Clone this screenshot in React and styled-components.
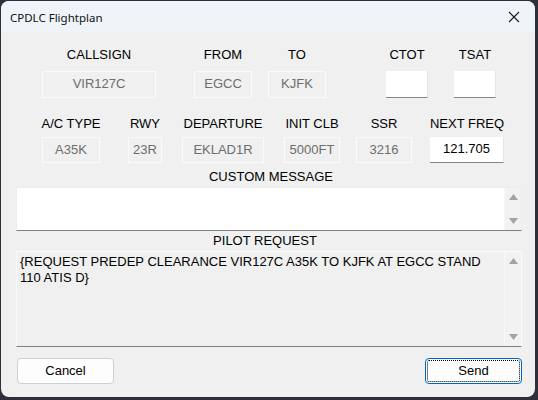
import React from 'react';
import styled, { createGlobalStyle } from 'styled-components';

const GlobalStyle = createGlobalStyle`
  html, body {
    margin: 0;
    padding: 0;
    background: #2e2f3b;
  }
  body {
    width: 538px;
    height: 400px;
    overflow: hidden;
  }
`;

const row1 = [
  { label: 'CALLSIGN', value: 'VIR127C', width: 114, offset: 26 },
  { label: 'FROM', value: 'EGCC', width: 58, offset: 38 },
  { label: 'TO', value: 'KJFK', width: 58, offset: 16 },
  { label: 'CTOT', value: '', width: 42, offset: 60, editable: true },
  { label: 'TSAT', value: '', width: 42, offset: 26, editable: true },
];

const row2 = [
  { label: 'A/C TYPE', value: 'A35K', width: 58, offset: 26 },
  { label: 'RWY', value: '23R', width: 34, offset: 28 },
  { label: 'DEPARTURE', value: 'EKLAD1R', width: 82, offset: 20 },
  { label: 'INIT CLB', value: '5000FT', width: 56, offset: 20 },
  { label: 'SSR', value: '3216', width: 56, offset: 16 },
  { label: 'NEXT FREQ', value: '121.705', width: 74, offset: 18, editable: true },
];

function CloseIcon() {
  return (
    <svg width="12" height="12" viewBox="0 0 12 12">
      <path d="M1 1 L11 11 M11 1 L1 11" stroke="#1b1b1b" strokeWidth="1.1" fill="none" />
    </svg>
  );
}

function Triangle({ down }) {
  return (
    <svg width="9" height="6" viewBox="0 0 9 6">
      <path d={down ? 'M0 0 H9 L4.5 6 Z' : 'M0 6 H9 L4.5 0 Z'} fill="#a3a3a3" />
    </svg>
  );
}

function Scroller() {
  return (
    <ScrollTrack>
      <Triangle />
      <Triangle down />
    </ScrollTrack>
  );
}

function FieldRow({ fields, gap, boxHeight, top }) {
  return (
    <Row $top={top}>
      {fields.map(f => (
        <Field key={f.label} $width={f.width} $offset={f.offset} $gap={gap}>
          <Label>{f.label}</Label>
          {f.editable ? (
            <InputBox $height={boxHeight}>{f.value}</InputBox>
          ) : (
            <ReadBox $height={boxHeight}>{f.value}</ReadBox>
          )}
        </Field>
      ))}
    </Row>
  );
}

export default function App() {
  return (
    <>
      <GlobalStyle />
      <Window>
        <TitleBar>
          <Title>CPDLC Flightplan</Title>
          <CloseButton>
            <CloseIcon />
          </CloseButton>
        </TitleBar>
        <Body>
          <FieldRow fields={row1} gap={9} boxHeight={27} top={15} />
          <FieldRow fields={row2} gap={6} boxHeight={26} top={18} />

          <Section $top={6}>
            <SectionLabel $shift={2}>CUSTOM MESSAGE</SectionLabel>
            <MessageBox $height={44} $white>
              <MessageText />
              <Scroller />
            </MessageBox>
          </Section>

          <Section $top={2}>
            <SectionLabel $shift={-4}>PILOT REQUEST</SectionLabel>
            <MessageBox $height={96}>
              <MessageText>
                {'{REQUEST PREDEP CLEARANCE VIR127C A35K TO KJFK AT EGCC STAND 110 ATIS D}'}
              </MessageText>
              <Scroller />
            </MessageBox>
          </Section>

          <Buttons>
            <Button>Cancel</Button>
            <Button $primary>
              <FocusRing>Send</FocusRing>
            </Button>
          </Buttons>
        </Body>
      </Window>
    </>
  );
}

const Window = styled.div`
  margin: 1px 0 0 1px;
  width: 534px;
  height: 396px;
  border-radius: 8px;
  background: #f0f0f0;
  overflow: hidden;
  display: flex;
  flex-direction: column;
  font-family: "Liberation Sans", Arial, sans-serif;
  font-size: 13px;
  color: #000;
`;

const TitleBar = styled.div`
  height: 31px;
  background: #eef4f8;
  display: flex;
  align-items: center;
  justify-content: space-between;
  padding: 0 0 0 9px;
`;

const Title = styled.div`
  font-family: "Noto Sans", "Open Sans", sans-serif;
  font-size: 11.5px;
  color: #111;
  margin-top: 1px;
`;

const CloseButton = styled.div`
  width: 46px;
  height: 31px;
  display: flex;
  align-items: center;
  justify-content: center;
  margin-right: -2px;
`;

const Body = styled.div`
  display: flex;
  flex-direction: column;
  padding: 0 13px 0 15px;
`;

const Row = styled.div`
  display: flex;
  margin-top: ${p => p.$top}px;
`;

const Field = styled.div`
  width: ${p => p.$width}px;
  margin-left: ${p => p.$offset}px;
  display: flex;
  flex-direction: column;
  align-items: center;
  gap: ${p => p.$gap}px;
`;

const Label = styled.div`
  line-height: 15px;
  white-space: nowrap;
`;

const ReadBox = styled.div`
  box-sizing: border-box;
  width: 100%;
  height: ${p => p.$height}px;
  border: 1px solid #fafafa;
  background: #f0f0f0;
  color: #6d6d6d;
  display: flex;
  align-items: center;
  justify-content: center;
  padding-bottom: 2px;
`;

const InputBox = styled.div`
  box-sizing: border-box;
  width: 100%;
  height: ${p => p.$height}px;
  background: #fff;
  border-right: 1px solid #e4e4e4;
  border-bottom: 1px solid #858585;
  display: flex;
  align-items: center;
  justify-content: center;
  padding-bottom: 2px;
`;

const Section = styled.div`
  display: flex;
  flex-direction: column;
  align-items: center;
  gap: 3px;
  margin-top: ${p => p.$top}px;
`;

const SectionLabel = styled.div`
  line-height: 15px;
  margin-left: ${p => p.$shift * 2}px;
`;

const MessageBox = styled.div`
  box-sizing: border-box;
  width: 506px;
  height: ${p => p.$height}px;
  background: ${p => (p.$white ? '#fff' : '#f0f0f0')};
  border: 1px solid ${p => (p.$white ? '#ececec' : '#fafafa')};
  border-bottom: 1px solid #7f7f7f;
  display: flex;
`;

const MessageText = styled.div`
  flex: 1;
  padding: 2px 0 0 3px;
  line-height: 16px;
`;

const ScrollTrack = styled.div`
  width: 16px;
  background: #f2f2f2;
  border-left: 1px solid #f8f8f8;
  display: flex;
  flex-direction: column;
  justify-content: space-between;
  align-items: center;
  padding: 6px 0 6px;
`;

const Buttons = styled.div`
  display: flex;
  justify-content: space-between;
  margin-top: 11px;
  padding: 0 0 0 1px;
  width: 505px;
`;

const Button = styled.div`
  box-sizing: border-box;
  width: 97px;
  height: 26px;
  background: #fdfdfd;
  border: 1px solid ${p => (p.$primary ? '#0067c0' : '#d0d0d0')};
  border-radius: 4px;
  display: flex;
  align-items: center;
  justify-content: center;
  padding: ${p => (p.$primary ? '1px' : '0 0 1px')};
`;

const FocusRing = styled.div`
  box-sizing: border-box;
  width: 100%;
  height: 100%;
  border: 1px dotted #000;
  border-radius: 2px;
  display: flex;
  align-items: center;
  justify-content: center;
  padding-bottom: 1px;
`;
